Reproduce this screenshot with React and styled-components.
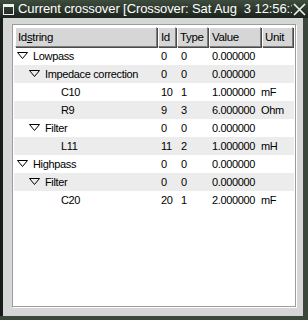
import React from "react";
import styled, { createGlobalStyle } from "styled-components";

const GlobalStyle = createGlobalStyle`
  html, body {
    margin: 0;
    padding: 0;
    background: #d6d6d6;
  }
  body {
    font-family: "Liberation Sans", Arial, sans-serif;
  }
`;

const rows = [
  { level: 0, open: true, name: "Lowpass", id: "0", type: "0", value: "0.000000", unit: "" },
  { level: 1, open: true, name: "Impedace correction", id: "0", type: "0", value: "0.000000", unit: "" },
  { level: 2, name: "C10", id: "10", type: "1", value: "1.000000", unit: "mF" },
  { level: 2, name: "R9", id: "9", type: "3", value: "6.000000", unit: "Ohm" },
  { level: 1, open: true, name: "Filter", id: "0", type: "0", value: "0.000000", unit: "" },
  { level: 2, name: "L11", id: "11", type: "2", value: "1.000000", unit: "mH" },
  { level: 0, open: true, name: "Highpass", id: "0", type: "0", value: "0.000000", unit: "" },
  { level: 1, open: true, name: "Filter", id: "0", type: "0", value: "0.000000", unit: "" },
  { level: 2, name: "C20", id: "20", type: "1", value: "2.000000", unit: "mF" },
];

const columns = [
  { key: "Idstring", width: 142 },
  { key: "Id", width: 18 },
  { key: "Type", width: 31 },
  { key: "Value", width: 52 },
  { key: "Unit", width: 31 },
];

function Expander() {
  return (
    <svg width="11" height="7" viewBox="0 0 11 7">
      <polygon points="0.5,0.5 10.5,0.5 5.5,6.5" fill="none" stroke="#000" strokeWidth="1" />
    </svg>
  );
}

function App() {
  return (
    <>
      <GlobalStyle />
      <Window>
        <TitleBar>
          <MenuIcon />
          <Title>Current crossover [Crossover: Sat Aug&nbsp;&nbsp;3 12:56:16 2003]</Title>
          <CloseButton>
            <svg width="13" height="13" viewBox="0 0 13 13">
              <path d="M1 1 L12 12 M12 1 L1 12" stroke="#f2f2f2" strokeWidth="1.6" />
            </svg>
          </CloseButton>
        </TitleBar>
        <Frame>
          <Content>
            <TreeView>
              <Header>
                {columns.map((c) => (
                  <HeaderCell key={c.key} $width={c.width}>
                    {c.key === "Idstring" ? (
                      <>
                        Id<Mnemonic>s</Mnemonic>tring
                      </>
                    ) : (
                      c.key
                    )}
                  </HeaderCell>
                ))}
              </Header>
              {rows.map((r, i) => (
                <Row key={i} $shaded={i % 2 === 1}>
                  <NameCell $level={r.level} $leaf={!r.open}>
                    {r.open && (
                      <ExpanderBox>
                        <Expander />
                      </ExpanderBox>
                    )}
                    {r.name}
                  </NameCell>
                  <Cell>{r.id}</Cell>
                  <Cell>{r.type}</Cell>
                  <Cell>{r.value}</Cell>
                  <Cell>{r.unit}</Cell>
                </Row>
              ))}
            </TreeView>
          </Content>
        </Frame>
      </Window>
    </>
  );
}

const Window = styled.div`
  width: 308px;
  height: 320px;
  display: flex;
  flex-direction: column;
  overflow: hidden;
`;

const TitleBar = styled.div`
  height: 18px;
  display: flex;
  align-items: center;
  background: linear-gradient(#3e4c3e, #1c241c);
  color: #fff;
`;

const MenuIcon = styled.div`
  width: 9px;
  height: 7px;
  margin: 0 4px 0 3px;
  border: 1px solid #f0f0f0;
  border-top-width: 3px;
  flex-shrink: 0;
`;

const Title = styled.div`
  flex: 1;
  font-size: 13px;
  white-space: nowrap;
  overflow: hidden;
  line-height: 18px;
  letter-spacing: -0.1px;
`;

const CloseButton = styled.div`
  width: 15px;
  height: 18px;
  display: flex;
  align-items: center;
  justify-content: center;
  flex-shrink: 0;
  margin-right: 1px;
`;

const Frame = styled.div`
  flex: 1;
  display: flex;
  padding: 0 5px 4px 3px;
  background: linear-gradient(90deg, #151c15, #5d6d5d 40%, #3a463a);
  box-shadow: inset 0 -4px 0 #3a473a;
`;

const Content = styled.div`
  flex: 1;
  display: flex;
  background: #d6d6d6;
  padding: 6px 7px 9px 9px;
`;

const TreeView = styled.div`
  flex: 1;
  background: #fff;
  border: 1px solid #9c9c9c;
  box-shadow: 1px 1px 0 #fff;
  padding: 1px;
  font-size: 11px;
  letter-spacing: -0.35px;
  color: #000;
`;

const Header = styled.div`
  display: flex;
  gap: 1px;
  margin: 1px 1px 0;
  height: 20px;
`;

const HeaderCell = styled.div`
  width: ${(p) => p.$width}px;
  box-sizing: border-box;
  background: #d6d6d6;
  border: 1px solid;
  border-color: #fff #7c7c7c #7c7c7c #fff;
  box-shadow: 1px 1px 0 #4a4a4a;
  padding-left: 2px;
  display: flex;
  align-items: center;
  font-size: 11.5px;
`;

const Mnemonic = styled.span`
  text-decoration: underline;
`;

const Row = styled.div`
  display: grid;
  grid-template-columns: 144px 20px 31px 49px 36px;
  height: 18px;
  align-items: center;
  background: ${(p) => (p.$shaded ? "#ececec" : "#fff")};
`;

const NameCell = styled.div`
  display: flex;
  align-items: center;
  padding-left: ${(p) => (p.$leaf ? 47 : 3 + p.$level * 12)}px;
  white-space: nowrap;
`;

const ExpanderBox = styled.span`
  display: inline-flex;
  width: 16px;
  margin-top: -1px;
`;

const Cell = styled.div`
  padding-left: 3px;
  white-space: nowrap;
`;

export default App;
